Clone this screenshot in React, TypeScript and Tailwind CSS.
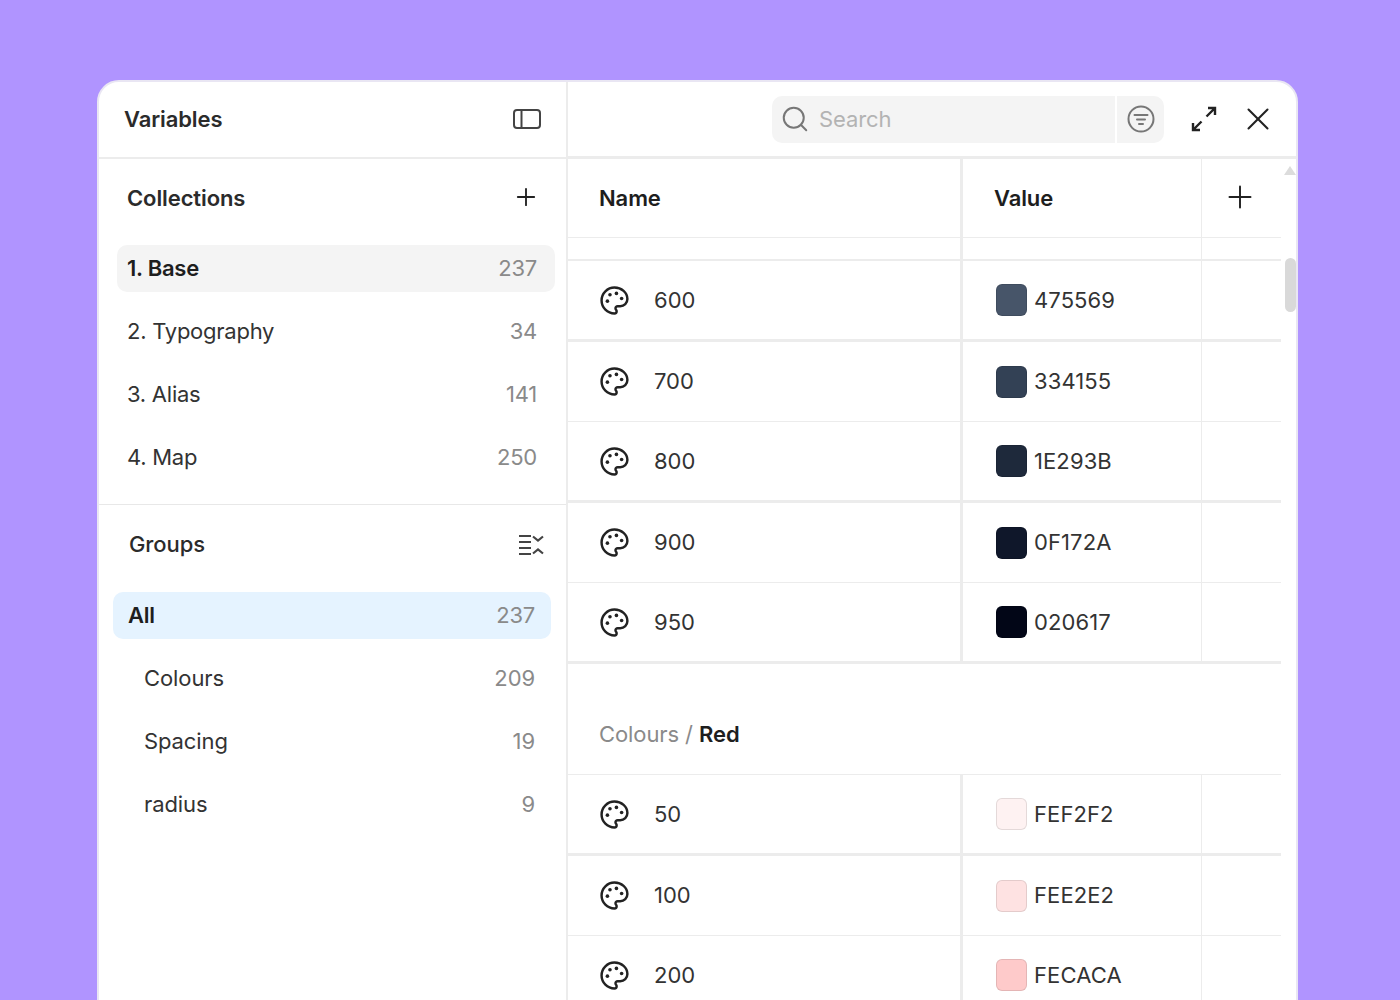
import { Plus, Search, X } from "lucide-react";

const font = { fontFamily: "Inter, sans-serif" };

const collections = [
  { name: "1. Base", count: 237, active: true },
  { name: "2. Typography", count: 34 },
  { name: "3. Alias", count: 141 },
  { name: "4. Map", count: 250 },
];

const groups = [
  { name: "Colours", count: 209 },
  { name: "Spacing", count: 19 },
  { name: "radius", count: 9 },
];

const slateRows = [
  { name: "600", hex: "475569", color: "bg-[#475569]", line: "h-[81px] border-b-[3px]" },
  { name: "700", hex: "334155", color: "bg-[#334155]", line: "h-[80px] border-b" },
  { name: "800", hex: "1E293B", color: "bg-[#1e293b]", line: "h-[81px] border-b-[3px]" },
  { name: "900", hex: "0F172A", color: "bg-[#0f172a]", line: "h-[80px] border-b" },
  { name: "950", hex: "020617", color: "bg-[#020617]", line: "h-[81px] border-b-[3px]" },
];

const redRows = [
  { name: "50", hex: "FEF2F2", color: "bg-[#fef2f2]", line: "h-[81px] border-b-[3px]" },
  { name: "100", hex: "FEE2E2", color: "bg-[#fee2e2]", line: "h-[80px] border-b" },
  { name: "200", hex: "FECACA", color: "bg-[#fecaca]", line: "h-[81px] border-b-[3px]" },
];

type Row = { name: string; hex: string; color: string; line: string };

const PaletteIcon = () => (
  <svg width="31" height="31" viewBox="0 0 24 24" fill="none" stroke="#222222" strokeWidth="1.9" strokeLinecap="round" strokeLinejoin="round">
    <path d="M12 2C6.5 2 2 6.5 2 12s4.5 10 10 10c.926 0 1.648-.746 1.648-1.688 0-.437-.18-.835-.437-1.125-.29-.289-.438-.652-.438-1.125a1.64 1.64 0 0 1 1.668-1.668h1.996c3.051 0 5.555-2.503 5.555-5.554C21.965 6.012 17.461 2 12 2z" />
    <circle cx="13.5" cy="6.5" r="1.4" fill="#222222" stroke="none" />
    <circle cx="17.5" cy="10.5" r="1.4" fill="#222222" stroke="none" />
    <circle cx="8.5" cy="7.5" r="1.4" fill="#222222" stroke="none" />
    <circle cx="6.5" cy="12.5" r="1.4" fill="#222222" stroke="none" />
  </svg>
);

const VarRow = ({ row }: { row: Row }) => (
  <div className={`flex border-[#ececec] ${row.line}`}>
    <div className="flex w-[395px] items-center border-r-[3px] border-[#ececec] pl-[31px]">
      <PaletteIcon />
      <span className="ml-6 text-[22px] text-[#333333]">{row.name}</span>
    </div>
    <div className="flex w-[239px] items-center border-r border-[#ececec] pl-[33px]">
      <div className={`h-8 w-[31px] rounded-md border border-black/10 ${row.color}`} />
      <span className="ml-[7px] text-[22px] tracking-[0.1px] text-[#333333]">{row.hex}</span>
    </div>
  </div>
);

export default function App() {
  return (
    <div className="h-screen overflow-hidden bg-[#b094ff] pl-[97px] pt-20" style={font}>
      <div className="flex h-[1000px] w-[1201px] rounded-t-[22px] border-2 border-[#e9e6f3] bg-white">
        {/* sidebar */}
        <div className="w-[469px] shrink-0 border-r-2 border-[#ececec]">
          <div className="flex h-[77px] items-center justify-between border-b-2 border-[#ececec] pl-[25px] pr-[24px]">
            <span className="text-[22px] font-semibold tracking-[-0.1px] text-[#2b2b2b]">Variables</span>
            <svg className="mb-[2px]" width="30" height="22" viewBox="0 0 30 22" fill="none" stroke="#444444" strokeWidth="2">
              <rect x="2" y="2" width="26" height="18" rx="3" />
              <path d="M9.5 2v18" />
            </svg>
          </div>

          <div className="flex h-[78px] items-center justify-between pl-[28px] pr-[26px]">
            <span className="text-[22px] font-semibold tracking-[-0.1px] text-[#2b2b2b]">Collections</span>
            <Plus className="mb-[2px] h-7 w-7 text-[#222222]" strokeWidth={1.6} />
          </div>

          <div className="flex flex-col gap-4 border-b border-[#e8e8e8] pb-[23px] pl-[18px] pr-[11px] pt-2">
            {collections.map((c) => (
              <div
                key={c.name}
                className={`flex h-[47px] items-center justify-between rounded-[10px] pl-[10px] pr-[18px] text-[22px] tracking-[-0.25px] ${
                  c.active ? "bg-[#f4f4f4] font-semibold text-[#1e1e1e]" : "text-[#333333]"
                }`}
              >
                <span>{c.name}</span>
                <span className="font-normal text-[#8a8a8a]">{c.count}</span>
              </div>
            ))}
          </div>

          <div className="flex h-[79px] items-center justify-between pl-[30px] pr-[22px]">
            <span className="text-[22px] font-medium tracking-[-0.1px] text-[#2b2b2b]">Groups</span>
            <svg width="25" height="20" viewBox="0 0 25 20" fill="none" stroke="#444444" strokeWidth="2.2">
              <path d="M0 1h12M0 7h12M0 13h12M0 19h12" />
              <path d="M14 1.5l5 4 5-4M14 18.5l5-4 5 4" />
            </svg>
          </div>

          <div className="flex flex-col gap-4 pl-[14px] pr-[15px] pt-2">
            <div className="flex h-[47px] items-center justify-between rounded-[10px] bg-[#e5f3ff] pl-[15px] pr-[16px] text-[22px] font-semibold tracking-[-0.25px] text-[#1e1e1e]">
              <span>All</span>
              <span className="font-normal text-[#8a8a8a]">237</span>
            </div>
            {groups.map((g) => (
              <div key={g.name} className="flex h-[47px] items-center justify-between pl-[31px] pr-[16px] text-[22px] tracking-[-0.1px] text-[#333333]">
                <span>{g.name}</span>
                <span className="text-[#8a8a8a]">{g.count}</span>
              </div>
            ))}
          </div>
        </div>

        {/* main */}
        <div className="min-w-0 flex-1">
          <div className="flex h-[77px] items-center border-b-[3px] border-[#ececec] pl-[204px]">
            <div className="flex h-[47px] w-[392px] rounded-[10px] bg-[#f4f4f4]">
              <div className="flex flex-1 items-center gap-[9px] border-r-2 border-white pl-2">
                <Search className="h-[30px] w-[30px] text-[#777777]" strokeWidth={1.6} />
                <span className="text-[22px] tracking-[-0.1px] text-[#b3b3b3]">Search</span>
              </div>
              <div className="flex w-[47px] items-center justify-center">
                <svg width="28" height="28" viewBox="0 0 28 28" fill="none" stroke="#777777" strokeWidth="2" strokeLinecap="round">
                  <circle cx="14" cy="14" r="12.5" />
                  <path d="M7.5 10h13M10 14.5h8M12 19h4" />
                </svg>
              </div>
            </div>
            <svg className="ml-[27px]" width="26" height="26" viewBox="0 0 26 26" fill="none" stroke="#222222" strokeWidth="2.4">
              <path d="M15.5 10.5L24 2M17 2h7v7M10.5 15.5L2 24M2 17v7h7" />
            </svg>
            <X className="ml-[22px] h-[38px] w-[38px] text-[#222222]" strokeWidth={1.3} />
          </div>

          <div className="flex">
            <div className="w-[713px] shrink-0">
              <div className="flex h-[79px] border-b border-[#ececec]">
                <div className="flex w-[395px] items-center border-r-[3px] border-[#ececec] pl-[31px] pt-px text-[22px] font-semibold tracking-[-0.1px] text-[#1e1e1e]">
                  Name
                </div>
                <div className="flex w-[239px] items-center border-r border-[#ececec] pl-[31px] pt-px text-[22px] font-semibold tracking-[-0.1px] text-[#1e1e1e]">
                  Value
                </div>
                <div className="flex flex-1 items-center pl-5">
                  <Plus className="mb-[2px] h-9 w-9 text-[#222222]" strokeWidth={1.3} />
                </div>
              </div>
              <div className="flex h-[23px] border-b-2 border-[#ececec]">
                <div className="w-[395px] border-r-[3px] border-[#ececec]" />
                <div className="w-[239px] border-r border-[#ececec]" />
              </div>
              {slateRows.map((r) => (
                <VarRow key={r.name} row={r} />
              ))}
              <div className="flex h-[111px] items-end border-b border-[#ececec] pb-[23px] pl-[31px] text-[22px] tracking-[-0.1px] text-[#8a8a8a]">
                <span>
                  Colours / <span className="font-semibold text-[#1e1e1e]">Red</span>
                </span>
              </div>
              {redRows.map((r) => (
                <VarRow key={r.name} row={r} />
              ))}
            </div>

            {/* scrollbar */}
            <div className="flex flex-1 flex-col items-center pl-[3px] pt-[7px]">
              <div className="h-0 w-0 border-x-[6px] border-b-[9px] border-x-transparent border-b-[#dcdcdc]" />
              <div className="mt-[83px] h-[54px] w-[11px] rounded-full bg-[#d9d9d9]" />
            </div>
          </div>
        </div>
      </div>
    </div>
  );
}
